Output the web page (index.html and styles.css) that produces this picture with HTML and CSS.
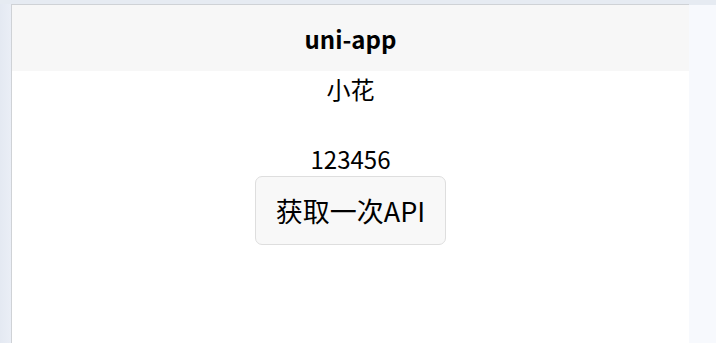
FILE: index.html
```html
<!DOCTYPE html>
<html lang="zh-CN">
<head>
    <meta charset="UTF-8">
    <meta name="viewport" content="width=device-width, initial-scale=1.0">
    <title>uni-app</title>
    <link rel="stylesheet" href="styles.css">
</head>
<body>
    <div class="topbar"></div>
    <div class="workspace">
        <div class="sidebar"></div>
        <div class="frame">
            <header class="navbar">
                <h1 class="navbar__title">uni-app</h1>
            </header>
            <main class="page">
                <div class="line">小花</div>
                <div class="line"></div>
                <div class="line">123456</div>
                <button class="btn-api" type="button">获取一次API</button>
            </main>
        </div>
        <div class="panel"></div>
    </div>
</body>
</html>
```

FILE: styles.css
```css
* { margin: 0; padding: 0; box-sizing: border-box; }
html, body { height: 100%; }
body {
    font-family: "Noto Sans CJK SC", "Noto Sans", sans-serif;
    background: #e6ebf2;
    color: #000;
    display: flex;
    flex-direction: column;
    overflow: hidden;
}
.topbar{
    height: 4px;
    flex-shrink: 0;
}
.workspace{
    flex: 1;
    display: flex;
}
.sidebar{
    width: 11px;
    background: linear-gradient(to right, #e4e9f2, #eaeef6);
}
.frame{
    width: 678px;
    background: #fff;
    border-top: 1px solid #cfd2d6;
    border-left: 1px solid #cfd2d6;
    display: flex;
    flex-direction: column;
}
.panel{
    flex: 1;
    margin-top: 1px;
    background: #f7f9fd;
}
.navbar{
    height: 66px;
    background: #f7f7f7;
    display: flex;
    align-items: center;
    justify-content: center;
}
.navbar__title{
    font-size: 24px;
    font-weight: 700;
}
.page{
    text-align: center;
    font-size: 24px;
}
.line{
    height: 35px;
    line-height: 35px;
}
.btn-api{
    display: inline-block;
    font-family: inherit;
    font-size: 27px;
    line-height: 67px;
    padding: 0 20px;
    background: #f8f8f8;
    border: 1px solid #dedede;
    border-radius: 7px;
    color: #000;
}
```
